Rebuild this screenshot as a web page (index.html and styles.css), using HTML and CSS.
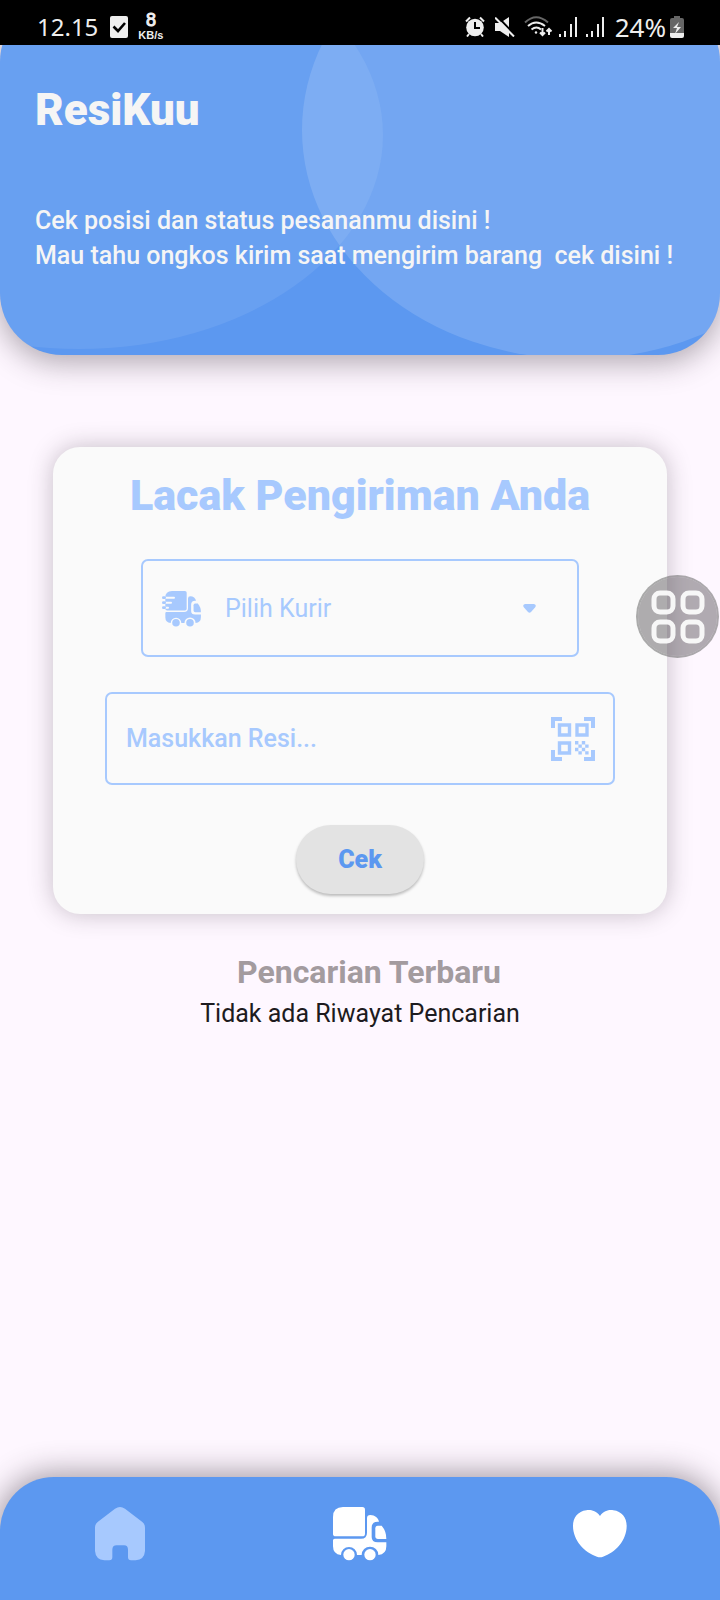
FILE: index.html
```html
<!DOCTYPE html>
<html lang="id">
<head>
<meta charset="utf-8">
<meta name="viewport" content="width=device-width, initial-scale=1">
<title>ResiKuu</title>
<link rel="stylesheet" href="styles.css">
</head>
<body>
<div class="status">
  <div class="status-group">
    <span class="clock">12.15</span>
    <svg class="check" width="18" height="22" viewBox="0 0 18 22"><rect width="18" height="22" rx="2" fill="#eee"/><path d="M3.500 10.500l4.500 4.500 7-8" fill="none" stroke="#000" stroke-width="2.600"/></svg>
    <span class="speed"><span class="speed-value">8</span><span class="speed-unit">KB/s</span></span>
  </div>
  <div class="status-group status-right">
    <svg width="20" height="21" viewBox="0 0 20 21"><circle cx="10" cy="11.500" r="8.800" fill="#eee"/><path d="M1 5.500L5 1.500M19 5.500L15 1.500M4 18l-2 2.500M16 18l2 2.500" stroke="#eee" stroke-width="2"/><path d="M10 6v6h5" fill="none" stroke="#000" stroke-width="2"/></svg>
    <svg class="mute" width="20" height="20" viewBox="0 0 20 20"><path d="M0 6h5l9-6v20l-9-6H0z" fill="#eee"/><path d="M2-1l19 20" stroke="#000" stroke-width="2"/><path d="M0 .5L19 19.500" stroke="#eee" stroke-width="2"/></svg>
    <svg class="wifi" width="29" height="21" viewBox="0 0 29 21" fill="none" stroke="#eee" stroke-width="2"><path d="M1 6.500Q12-4 24 6.500" stroke="#666"/><path d="M4 10q8-7 17 0M7.500 13.500q5-4 9.500 0"/><circle cx="12" cy="16.500" r="1.200" fill="#eee" stroke="none"/><path d="M18.500 12v7M16 16.500l2.500 2.500 2.500-2.500M25 19v-6M22.500 15.500l2.500-2.500 2.500 2.500"/></svg>
    <svg class="signal" width="19" height="20" viewBox="0 0 19 20" fill="#eee"><path d="M0 17h2v3H0zM5 14h2v6H5zM11 7h2v13h-2zM16 0h2v20h-2z"/></svg>
    <svg class="signal" width="19" height="20" viewBox="0 0 19 20" fill="#eee"><path d="M0 17h2v3H0zM5 14h2v6H5zM11 7h2v13h-2zM16 0h2v20h-2z"/></svg>
    <span class="percent">24%</span>
    <svg width="14" height="22" viewBox="0 0 14 22"><path d="M4 0h6v2h2q2 0 2 2v13H0V4q0-2 2-2h2z" fill="#666"/><path d="M0 17h14v3q0 2-2 2H2q-2 0-2-2z" fill="#eee"/><path d="M9 6l-6 6h4l-2 6 6-7H7z" fill="#eee"/></svg>
  </div>
</div>

<header class="hero">
  <svg class="hero-art" viewBox="0 0 720 355" preserveAspectRatio="none" aria-hidden="true"><ellipse cx="79" cy="135" rx="304" ry="214" fill="#fff" fill-opacity=".08"/><ellipse cx="578" cy="130" rx="276" ry="229" fill="#fff" fill-opacity=".14"/></svg>
  <h1 class="brand">ResiKuu</h1>
  <p class="intro">Cek posisi dan status pesananmu disini !<br>Mau tahu ongkos kirim saat mengirim barang&nbsp; cek disini !</p>
</header>

<main class="main">
  <form class="card">
    <h2 class="card-title">Lacak Pengiriman Anda</h2>
    <label class="field courier">
      <svg width="40" height="36" viewBox="0 0 120 108" fill="currentColor"><g transform="translate(10 0) scale(.667)"><path d="M30 0H88q8 0 8 8V80q0 8-8 8H8q-8 0-8-8V30Q0 0 30 0z"/><path d="M0 100q0-5 5-5H84q18 0 18-18V34q0-10 10-10c14 0 24 9 26 20h-4q-18 0-18 18v28q0 16 18 16H160v12q0 24-24 26a24 24 0 0 0-50 0H72a24 24 0 0 0-48 0Q0 142 0 118z"/><path d="M134 56h12q14 16 14 40H135q-8 0-8-8V64q0-8 7-8z"/><circle cx="48" cy="143" r="17"/><circle cx="111" cy="143" r="17"/></g><path d="M8 20h28M8 35h19M8 50h10" stroke="#fafafa" stroke-width="6" stroke-linecap="round"/><path d="M4 20h4M4 35h4M4 50h4" stroke="currentColor" stroke-width="8" stroke-linecap="round"/></svg>
      <select class="courier-select" aria-label="Pilih Kurir"><option>Pilih Kurir</option></select>
      <svg width="13" height="9" viewBox="0 0 13 9"><path d="M2 0h9q3 1 1 3.500L8 8q-1.500 1.500-3 0L1 3.500Q-1 1 2 0z" fill="currentColor"/></svg>
    </label>
    <div class="field receipt">
      <input class="receipt-input" type="text" placeholder="Masukkan Resi..." aria-label="Masukkan Resi">
      <button class="scan" type="button" aria-label="Pindai kode QR">
        <svg width="44" height="44" viewBox="0 0 44 44" fill="currentColor"><path d="M0 0h11v4H4v7H0zM33 0h11v11h-4V4h-7zM0 33h4v7h7v4H0zM40 33h4v11H33v-4h7z"/><path d="M8.500 8h10v10h-10zM26 8h10v10H26zM8.500 26h10v10h-10z" fill="none" stroke="currentColor" stroke-width="3.400"/><path d="M24 24h3.400v3.400H24zM30.800 24h3.400v3.400h-3.400zM27.400 27.400h3.400v3.400h-3.400zM34.200 27.400h3.400v3.400h-3.400zM24 30.800h3.400v3.400H24zM30.800 30.800h3.400v3.400h-3.400zM27.400 34.200h3.400v3.400h-3.400zM34.200 34.200h3.400v3.400h-3.400z"/></svg>
      </button>
    </div>
    <button class="submit" type="button">Cek</button>
  </form>
  <section class="recent">
    <h3 class="recent-title">Pencarian Terbaru</h3>
    <p class="recent-empty">Tidak ada Riwayat Pencarian</p>
  </section>
</main>

<button class="assist" type="button" aria-label="Menu pintas">
  <svg width="54" height="54" viewBox="0 0 54 54" fill="none" stroke="#fff" stroke-opacity=".9" stroke-width="5"><rect x="3" y="3" width="19" height="19" rx="6"/><rect x="32" y="3" width="19" height="19" rx="6"/><rect x="3" y="32" width="19" height="19" rx="6"/><rect x="32" y="32" width="19" height="19" rx="6"/></svg>
</button>

<nav class="tabs">
  <a class="tab tab-dim" href="#home" aria-label="Beranda"><svg width="50" height="54" viewBox="0 0 150 162" fill="currentColor"><path d="M60 5Q75-5 90 5L142 45Q150 51 150 62V132Q148 158 122 160H108Q99 160 99 151V128Q99 115 87 115H65Q52 115 52 128V151Q52 160 43 160H28Q2 158 0 132V62Q0 51 8 45z"/></svg></a>
  <a class="tab" href="#track" aria-label="Lacak"><svg width="54" height="54" viewBox="0 0 162 162" fill="currentColor"><path d="M30 0H88q8 0 8 8V80q0 8-8 8H8q-8 0-8-8V30Q0 0 30 0z"/><path d="M0 100q0-5 5-5H84q18 0 18-18V34q0-10 10-10c14 0 24 9 26 20h-4q-18 0-18 18v28q0 16 18 16H160v12q0 24-24 26a24 24 0 0 0-50 0H72a24 24 0 0 0-48 0Q0 142 0 118z"/><path d="M134 56h12q14 16 14 40H135q-8 0-8-8V64q0-8 7-8z"/><circle cx="48" cy="143" r="17"/><circle cx="111" cy="143" r="17"/></svg></a>
  <a class="tab" href="#favorites" aria-label="Favorit"><svg width="54" height="54" viewBox="0 0 162 162" fill="currentColor"><path d="M81 27C68 9 50 8 40 10 15 13 0 32 0 57 0 100 35 137 72 149Q81 153 90 149C127 137 161 100 161 57 161 32 146 13 121 10 111 8 94 9 81 27z"/></svg></a>
</nav>
</body>
</html>
```
FILE: styles.css
```css
* { box-sizing: border-box; }
body {
  margin: 0;
  min-height: 100vh;
  display: flex;
  flex-direction: column;
  background: #fef7ff;
  color: #1d1b20;
  font-family: Roboto, sans-serif;
  font-size: 25px;
  overflow-x: hidden;
}
h1, h2, h3, p { margin: 0; }
svg { display: block; flex: none; }
button, select, input { font: inherit; color: inherit; border: 0; padding: 0; }

.status {
  position: relative;
  z-index: 2;
  height: 45px;
  padding: 8px 36px 0 37px;
  display: flex;
  justify-content: space-between;
  background: #000;
  color: #eee;
  font-family: "Noto Sans", sans-serif;
}
.status-group { display: flex; align-items: center; height: 37px; }
.clock { font-size: 24px; line-height: 36px; }
.check { margin-left: 12px; }
.speed {
  margin-left: 10px;
  display: flex;
  flex-direction: column;
  align-items: center;
  font-family: "Liberation Sans", sans-serif;
  font-weight: 700;
}
.speed-value { font-size: 18px; line-height: 18px; font-weight: 400; -webkit-text-stroke: 1px #eee; }
.speed-unit { font-size: 11px; line-height: 13px; }
.mute { margin-left: 10px; }
.wifi { margin-left: 9px; }
.signal { margin-left: 8px; }
.wifi + .signal { margin-left: 6px; }
.percent { margin-left: 10px; font-size: 26px; line-height: 36px; }
.percent + svg { margin-left: 4px; }

.hero {
  position: relative;
  margin-top: -45px;
  padding: 86px 20px 82px 35px;
  border-radius: 62px;
  background: #5c98f0;
  color: #f5f5f5;
  box-shadow: 0 6px 30px 2px rgba(50, 40, 50, .38);
}
.hero-art {
  position: absolute;
  inset: 0;
  width: 100%;
  height: 100%;
  border-radius: 62px;
}
.brand { position: relative; font-size: 44px; line-height: 48px; font-weight: 900; }
.intro { position: relative; margin-top: 69px; font-weight: 500; line-height: 35px; }

.main { flex: 1; padding: 92px 53px 40px; }
.card {
  display: flex;
  flex-direction: column;
  align-items: center;
  padding: 23px 52px 20px;
  border-radius: 27px;
  background: #fafafa;
  color: #a7c9fe;
  box-shadow: 0 0 24px rgba(50, 40, 50, .28);
}
.card-title { font-size: 43px; line-height: 50px; font-weight: 900; }
.field {
  display: flex;
  align-items: center;
  border: 2px solid #a7c9fe;
  border-radius: 7px;
}
.courier { align-self: stretch; height: 98px; margin: 39px 36px 0; padding: 1px 41px 0 19px; }
.courier-select {
  flex: 1;
  min-width: 0;
  height: 60px;
  margin-left: 23px;
  appearance: none;
  background: transparent;
}
.receipt { align-self: stretch; height: 93px; margin-top: 35px; padding: 0 18px 0 19px; }
.receipt-input {
  flex: 1;
  min-width: 0;
  height: 60px;
  background: transparent;
  font-weight: 500;
}
.receipt-input::placeholder { color: #a7c9fe; opacity: 1; }
.scan { background: transparent; }
.submit {
  width: 128px;
  height: 69px;
  margin-top: 40px;
  border-radius: 35px;
  background: #e3e3e3;
  color: #5c98f0;
  font-weight: 900;
  box-shadow: 0 2px 3px rgba(0, 0, 0, .25);
}

.recent { padding-top: 38px; text-align: center; }
.recent-title { padding-left: 18px; font-size: 32px; line-height: 40px; font-weight: 700; color: #a39b9f; }
.recent-empty { margin-top: 4px; line-height: 36px; }

.assist {
  position: fixed;
  top: 575px;
  right: 1px;
  z-index: 3;
  width: 83px;
  height: 83px;
  display: grid;
  place-items: center;
  border: 2px solid rgba(90, 90, 90, .5);
  border-radius: 50%;
  background: rgba(70, 65, 70, .42);
  background-clip: padding-box;
}

.tabs {
  display: grid;
  grid-template-columns: repeat(3, 1fr);
  height: 123px;
  padding-top: 30px;
  border-radius: 54px 54px 0 0;
  background: #5c98f0;
  box-shadow: 0 0 30px 4px rgba(50, 40, 50, .45);
}
.tab { justify-self: center; color: #fff; }
.tab-dim { color: #a7c9fe; }
```
